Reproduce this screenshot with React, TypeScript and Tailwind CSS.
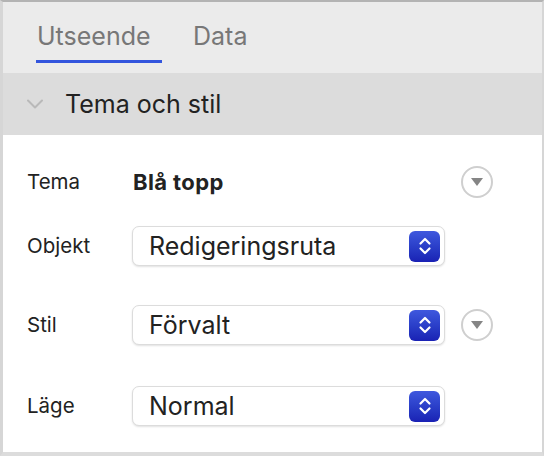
import React from "react";

function Stepper() {
  return (
    <div className="flex h-[31px] w-[31px] items-center justify-center rounded-[6px] bg-gradient-to-b from-[#3f58de] to-[#1a21b4]">
      <svg width="14" height="20" viewBox="0 0 14 20" fill="none">
        <path d="M2.5 7.5 L7 3 L11.5 7.5" stroke="white" strokeWidth="2.2" strokeLinecap="round" strokeLinejoin="round" />
        <path d="M2.5 12.5 L7 17 L11.5 12.5" stroke="white" strokeWidth="2.2" strokeLinecap="round" strokeLinejoin="round" />
      </svg>
    </div>
  );
}

function CircleBtn() {
  return (
    <div className="ml-[16px] flex h-[32px] w-[32px] items-center justify-center rounded-full border-2 border-[#cfcfcf] bg-white">
      <svg width="14" height="10" viewBox="0 0 14 10">
        <path d="M1 1 L13 1 L7 9 Z" fill="#858585" />
      </svg>
    </div>
  );
}

function Select({ value }: { value: string }) {
  return (
    <div className="flex h-[40px] w-[313px] items-center justify-between rounded-[7px] border border-[#dcdcdc] bg-white pl-[16px] pr-[4px] shadow-[0_1px_2px_rgba(0,0,0,0.12)]">
      <span className="text-[25px] leading-none text-[#222]">{value}</span>
      <Stepper />
    </div>
  );
}

export default function App() {
  return (
    <div
      className="flex h-[456px] w-[544px] flex-col overflow-hidden border-t-2 border-l-[3px] border-r-[2px] border-b-4 border-t-[#b3b3b3] border-l-[#d6d6d6] border-r-[#d6d6d6] border-b-[#dcdcdc] bg-white"
      style={{ fontFamily: "Inter, 'Liberation Sans', sans-serif" }}
    >
      <div className="flex h-[71px] shrink-0 items-end bg-[#ebebeb] pl-[33px]">
        <div className="flex w-[126px] flex-col">
          <span className="pb-[11px] pl-[1px] text-[25px] leading-none text-[#777]">Utseende</span>
          <div className="mb-[10px] h-[3px] w-[126px] bg-[#3355dd]" />
        </div>
        <div className="ml-[31px] flex flex-col">
          <span className="pb-[24px] text-[25px] leading-none text-[#777]">Data</span>
        </div>
      </div>
      <div className="flex h-[62px] shrink-0 items-center bg-[#dcdcdc] pl-[24px]">
        <svg width="16" height="10" viewBox="0 0 16 10" fill="none">
          <path d="M1 1.5 L8 8.5 L15 1.5" stroke="#b9b9b9" strokeWidth="2" strokeLinecap="round" strokeLinejoin="round" />
        </svg>
        <span className="ml-[22px] text-[25px] leading-none text-[#222]">Tema och stil</span>
      </div>
      <div className="flex flex-col pl-[24px] pt-[27px] text-[#222]">
        <div className="flex h-[40px] items-center">
          <span className="w-[105px] text-[20.5px]">Tema</span>
          <span className="w-[313px] pl-[1px] text-[22px] font-bold tracking-[0.4px]">Blå topp</span>
          <CircleBtn />
        </div>
        <div className="mt-[24px] flex h-[40px] items-center">
          <span className="w-[105px] text-[20.5px]">Objekt</span>
          <Select value="Redigeringsruta" />
        </div>
        <div className="mt-[39px] flex h-[40px] items-center">
          <span className="w-[105px] text-[20.5px]">Stil</span>
          <Select value="Förvalt" />
          <CircleBtn />
        </div>
        <div className="mt-[41px] flex h-[40px] items-center">
          <span className="w-[105px] text-[20.5px]">Läge</span>
          <Select value="Normal" />
        </div>
      </div>
    </div>
  );
}
